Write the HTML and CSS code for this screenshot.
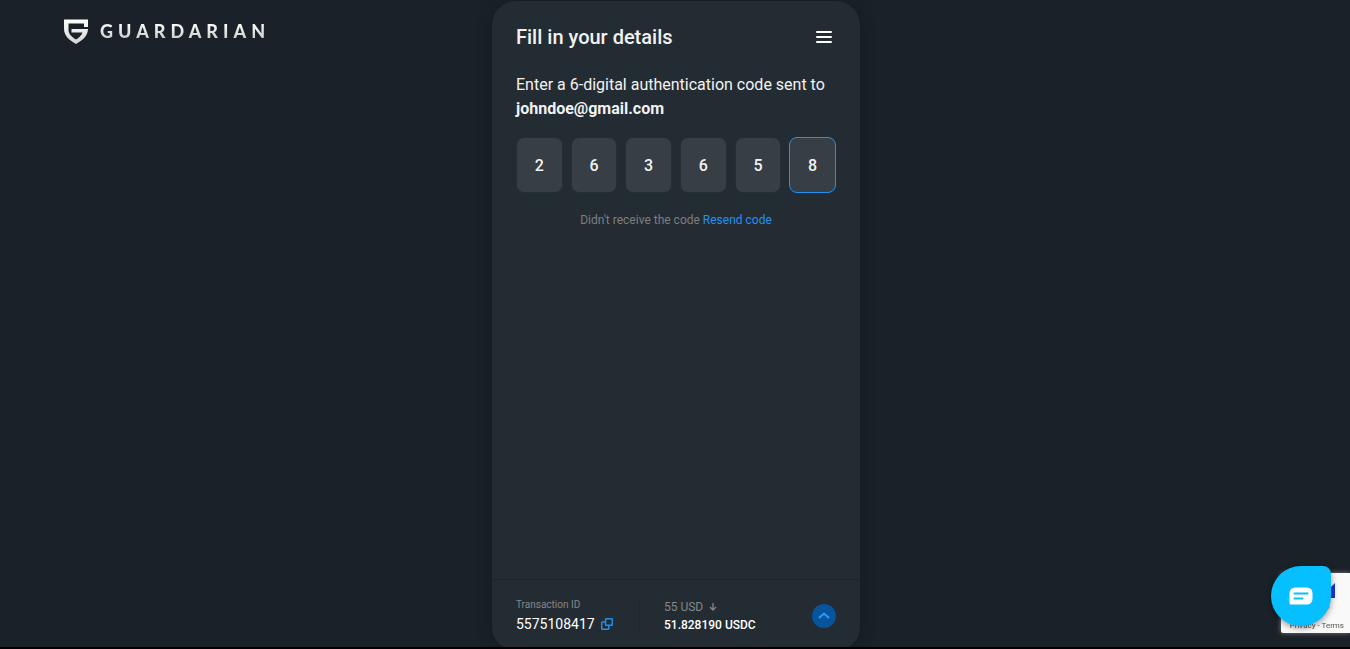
FILE: index.html
```html
<!DOCTYPE html>
<html lang="en">
<head>
<meta charset="utf-8">
<meta name="viewport" content="width=device-width, initial-scale=1">
<title>Guardarian</title>
<link rel="stylesheet" href="styles.css">
</head>
<body>
<div class="page">
  <header class="brand">
    <a class="brand-link" href="#">
      <svg class="brand-mark" viewBox="0 0 24 26" aria-hidden="true">
        <defs><linearGradient id="silver" x1="0" y1="0" x2="0" y2="1"><stop offset="0" stop-color="#fff"/><stop offset="1" stop-color="#d4d4d4"/></linearGradient></defs>
        <path fill="url(#silver)" d="M0 1.500H24V9H20V5.500H4.500V12C4.500 15.500 7.500 19 12 21.500C15.500 19.300 17.500 17.500 18.500 14.500H7.500V11H24C24 17.500 18.500 22.500 12 26C5.500 22.500 0 17.500 0 11Z"/>
      </svg>
      <span class="brand-name">GUARDARIAN</span>
    </a>
  </header>
  <main class="panel">
    <div class="panel-head">
      <h1 class="title">Fill in your details</h1>
      <button class="menu" type="button" aria-label="Menu">
        <svg class="menu-icon" viewBox="0 0 16 14" aria-hidden="true"><path d="M1 2H15M1 7H15M1 12H15" stroke="#fff" stroke-width="2" stroke-linecap="round"/></svg>
      </button>
    </div>
    <form class="content">
      <p class="prompt">Enter a 6-digital authentication code sent to <strong class="email">johndoe@gmail.com</strong></p>
      <div class="code">
        <input class="digit" aria-label="Digit 1" inputmode="numeric" maxlength="1" value="2">
        <input class="digit" aria-label="Digit 2" inputmode="numeric" maxlength="1" value="6">
        <input class="digit" aria-label="Digit 3" inputmode="numeric" maxlength="1" value="3">
        <input class="digit" aria-label="Digit 4" inputmode="numeric" maxlength="1" value="6">
        <input class="digit" aria-label="Digit 5" inputmode="numeric" maxlength="1" value="5">
        <input class="digit digit-active" aria-label="Digit 6" inputmode="numeric" maxlength="1" value="8">
      </div>
      <p class="resend">Didn't receive the code <a class="resend-link" href="#">Resend code</a></p>
    </form>
    <footer class="summary">
      <div class="transaction">
        <span class="transaction-label">Transaction ID</span>
        <span class="transaction-row">
          <span class="transaction-id">5575108417</span>
          <button class="copy" type="button" aria-label="Copy transaction ID">
            <svg class="copy-icon" viewBox="0 0 12 12" aria-hidden="true"><path d="M4.500 1.500Q4.500 .7 5.300 .7H10.500Q11.300 .7 11.300 1.500V6.500Q11.300 7.300 10.500 7.300H5.300Q4.500 7.300 4.500 6.500ZM4.500 4H1.500Q.7 4 .7 4.800V10.500Q.7 11.300 1.500 11.300H7Q7.800 11.300 7.800 10.500V7.300" fill="none" stroke="#2391f2" stroke-width="1.400"/></svg>
          </button>
        </span>
      </div>
      <div class="amount">
        <span class="amount-from">55 USD
          <svg class="arrow" viewBox="0 0 8 8" aria-hidden="true"><path d="M4 0V7M1 4L4 7L7 4" fill="none" stroke="#858687" stroke-width="1.300"/></svg>
        </span>
        <span class="amount-to">51.828190 USDC</span>
      </div>
      <button class="expand" type="button" aria-label="Show details">
        <svg class="chevron" viewBox="0 0 12 8" aria-hidden="true"><path d="M1 6L6 1.500L11 6" fill="none" stroke="#2b9bff" stroke-width="2"/></svg>
      </button>
    </footer>
  </main>
</div>
<aside class="captcha">
  <svg class="captcha-mark" viewBox="0 0 24 36" aria-hidden="true"><path fill="#1738e0" d="M23 1V16H15V9Z"/><path fill="#aaa" d="M10 24L18 24Q17 29 10 31Z"/></svg>
  <span class="captcha-text"><a class="captcha-link" href="#">Privacy</a> - <a class="captcha-link" href="#">Terms</a></span>
</aside>
<button class="chat" type="button" aria-label="Open chat">
  <svg class="chat-icon" viewBox="0 0 24 18" aria-hidden="true"><path fill="#fff" d="M6.500 .5H17.500Q23.500 .5 23.500 6.500V11.500Q23.500 17.500 17.500 17.500H2Q.5 17.500 .5 16V6.500Q.5 .5 6.500 .5Z"/><path d="M5.500 6.500H18.500M5.500 11.500H13.500" stroke="#05bfff" stroke-width="2" stroke-linecap="round"/></svg>
</button>
</body>
</html>
```
FILE: styles.css
```css
* {
  box-sizing: border-box;
}

body {
  margin: 0;
  background: #1a2128;
  color: #f2f2f2;
  font-family: Roboto, "Liberation Sans", sans-serif;
}

button {
  border: 0;
  padding: 0;
  background: none;
  cursor: pointer;
}

svg {
  display: block;
}

a {
  text-decoration: none;
}

.page {
  display: grid;
  grid-template-columns: 1fr 368px 1fr;
  height: 100vh;
  padding-top: 1px;
  overflow: hidden;
  border-bottom: 2px solid #000;
}

.brand {
  padding: 17px 0 0 64px;
}

.brand-link {
  display: inline-flex;
  align-items: center;
  gap: 12px;
  color: #e6e6e6;
}

.brand-mark {
  width: 24px;
  height: 26px;
}

.brand-name {
  font: 900 18px/26px Lato, sans-serif;
  letter-spacing: 5px;
  background: linear-gradient(#fff 20%, #ccc 80%);
  background-clip: text;
  color: transparent;
}

.panel {
  display: flex;
  flex-direction: column;
  height: calc(100vh + 1px);
  margin-left: 1px;
  margin-right: -1px;
  border-radius: 24px;
  background: #242c33;
  box-shadow: 0 0 14px #151b21;
}

.panel-head {
  display: flex;
  align-items: center;
  justify-content: space-between;
  padding: 24px 28px 0 24px;
}

.title {
  margin: 0;
  font-size: 20px;
  line-height: 24px;
  font-weight: 500;
}

.menu-icon {
  width: 16px;
  height: 14px;
}

.content {
  flex: 1;
  padding: 24px;
}

.prompt {
  margin: 0;
  font-size: 16px;
  line-height: 24px;
}

.email {
  display: block;
  font-weight: 700;
}

.code {
  display: grid;
  grid-template-columns: repeat(6, 1fr);
  gap: 8px;
  padding-top: 16px;
}

.digit {
  width: 100%;
  min-width: 0;
  height: 56px;
  border: 1px solid #252f36;
  border-radius: 8px;
  padding: 0;
  background: #373e45;
  color: #f2f2f2;
  font: 500 16px/24px Roboto, sans-serif;
  text-align: center;
  outline: 0;
}

.digit-active {
  border-color: #2391f2;
}

.resend {
  margin: 18px 0 0;
  color: #7c7e80;
  font-size: 12px;
  line-height: 18px;
  text-align: center;
}

.resend-link {
  color: #2391f2;
}

.summary {
  display: flex;
  align-items: center;
  height: 72px;
  padding: 0 24px;
  border-top: 1px solid #1d262b;
}

.transaction {
  display: flex;
  flex-direction: column;
  justify-content: flex-end;
  gap: 3px;
  width: 124px;
  height: 36px;
  border-right: 1px solid #20282e;
}

.transaction-label {
  color: #858687;
  font-size: 10px;
  line-height: 12px;
}

.transaction-row {
  display: flex;
  align-items: center;
  gap: 6px;
}

.transaction-id {
  color: #fff;
  font-size: 14px;
  line-height: 20px;
}

.copy-icon {
  width: 12px;
  height: 12px;
}

.amount {
  display: flex;
  flex: 1;
  flex-direction: column;
  padding-left: 24px;
}

.amount-from {
  display: flex;
  align-items: center;
  gap: 6px;
  color: #858687;
  font-size: 12px;
  line-height: 18px;
}

.arrow {
  width: 8px;
  height: 8px;
}

.amount-to {
  color: #fff;
  font-size: 12px;
  font-weight: 500;
  line-height: 18px;
}

.expand {
  display: grid;
  place-items: center;
  width: 24px;
  height: 24px;
  border-radius: 50%;
  background: #07549d;
}

.chevron {
  width: 12px;
  height: 8px;
}

.captcha {
  position: fixed;
  right: 0;
  bottom: 16px;
  display: flex;
  flex-direction: column;
  align-items: flex-end;
  justify-content: space-between;
  width: 69px;
  height: 60px;
  padding: 9px 6px 2px;
  border-radius: 2px 0 0 2px;
  background: #f9f9f9;
  box-shadow: 0 0 5px #808080;
}

.captcha-mark {
  width: 24px;
  height: 36px;
  margin-right: 8px;
}

.captcha-text {
  color: #555;
  font-size: 8px;
  line-height: 11px;
  white-space: nowrap;
}

.captcha-link {
  color: #555;
}

.chat {
  position: fixed;
  right: 19px;
  bottom: 23px;
  display: grid;
  place-items: center;
  width: 60px;
  height: 60px;
  border-radius: 50% 8px 50% 50%;
  background: #05bfff;
  box-shadow: 0 2px 6px #0006;
}

.chat-icon {
  width: 24px;
  height: 18px;
}
```
